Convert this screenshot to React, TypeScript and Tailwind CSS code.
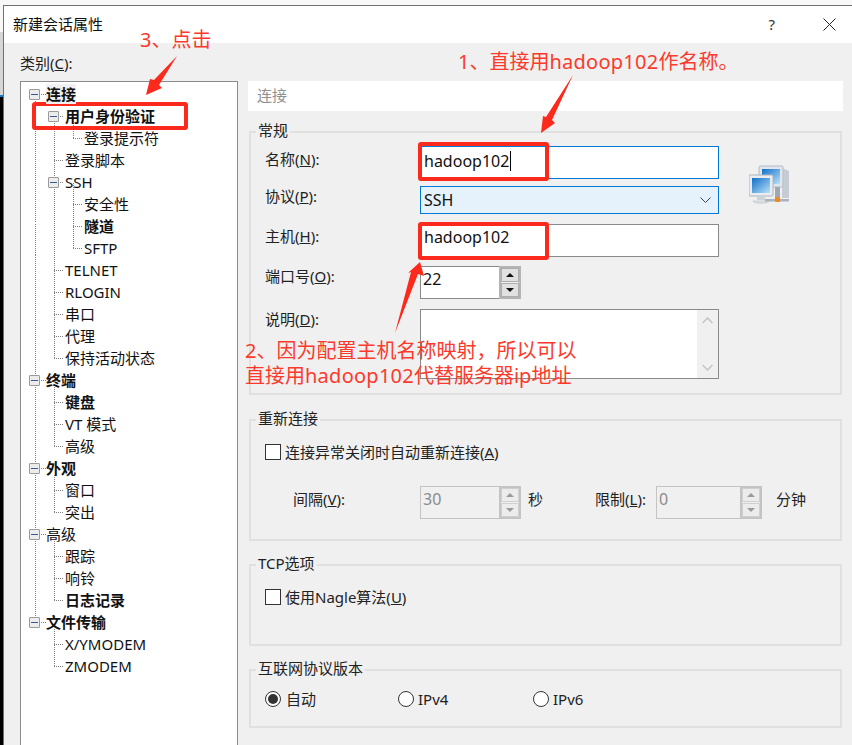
import React from "react";

const font = { fontFamily: '"Noto Sans", "Noto Sans CJK SC", sans-serif' };

type Row = { t: string; lv: 0 | 1 | 2; b?: boolean; box?: boolean; sel?: boolean };
const rows: Row[] = [
  { t: "连接", lv: 0, b: true, box: true, sel: true },
  { t: "用户身份验证", lv: 1, b: true, box: true },
  { t: "登录提示符", lv: 2 },
  { t: "登录脚本", lv: 1 },
  { t: "SSH", lv: 1, box: true },
  { t: "安全性", lv: 2 },
  { t: "隧道", lv: 2, b: true },
  { t: "SFTP", lv: 2 },
  { t: "TELNET", lv: 1 },
  { t: "RLOGIN", lv: 1 },
  { t: "串口", lv: 1 },
  { t: "代理", lv: 1 },
  { t: "保持活动状态", lv: 1 },
  { t: "终端", lv: 0, b: true, box: true },
  { t: "键盘", lv: 1, b: true },
  { t: "VT 模式", lv: 1 },
  { t: "高级", lv: 1 },
  { t: "外观", lv: 0, b: true, box: true },
  { t: "窗口", lv: 1 },
  { t: "突出", lv: 1 },
  { t: "高级", lv: 0, box: true },
  { t: "跟踪", lv: 1 },
  { t: "响铃", lv: 1 },
  { t: "日志记录", lv: 1, b: true },
  { t: "文件传输", lv: 0, b: true, box: true },
  { t: "X/YMODEM", lv: 1 },
  { t: "ZMODEM", lv: 1 },
];

const cy = (i: number) => 12.5 + i * 22;

function TreeLines() {
  const v: [number, number, number][] = [
    [14.5, cy(0), cy(24)],
    [33.5, cy(1), cy(12)],
    [52.5, cy(1) + 2, cy(2)],
    [33.5, cy(13) + 6, cy(16)],
    [33.5, cy(17) + 6, cy(19)],
    [33.5, cy(20) + 6, cy(23)],
    [33.5, cy(24) + 6, cy(26)],
    [52.5, cy(4), cy(7)],
  ];
  return (
    <svg className="absolute left-0 top-0" width="217" height="640" shapeRendering="crispEdges">
      {v.map(([x, a, b], i) => (
        <line key={i} x1={x} x2={x} y1={a} y2={b} stroke="#7f7f7f" strokeDasharray="1 1" />
      ))}
      {rows.map((r, i) => {
        const x = [14, 33, 52][r.lv];
        const x2 = [25, 43, 62][r.lv];
        return <line key={i} x1={x} x2={x2} y1={cy(i)} y2={cy(i)} stroke="#7f7f7f" strokeDasharray="1 1" />;
      })}
    </svg>
  );
}

function TreeRow({ r }: { r: Row }) {
  const pad = r.lv === 0 ? "pl-[8px]" : r.lv === 1 ? "pl-[27px]" : "pl-[63px]";
  return (
    <div className={`relative flex h-[22px] items-center ${pad}`}>
      {r.box && (
        <span className="z-10 mr-[6px] flex h-[11px] w-[11px] items-center justify-center rounded-[1px] border border-[#9a9a9a] bg-[#ececec]">
          <span className="h-px w-[7px] bg-[#3c5a96]" />
        </span>
      )}
      {!r.box && r.lv === 1 && <span className="w-[17px]" />}
      <span className={`z-10 text-[15px] leading-[20px] text-[#111] ${r.b ? "font-bold" : ""} ${r.sel ? "bg-[#f0f0f0] px-0" : ""}`}>
        {r.t}
      </span>
    </div>
  );
}

function Group({ title, h, mt, children }: { title: string; h: string; mt: string; children?: React.ReactNode }) {
  return (
    <div className={`mx-px border-2 border-[#e0e0e0] ${h} ${mt} flex flex-col`}>
      <div className="-mt-[13px] ml-[5px] h-[20px] w-fit bg-[#f0f0f0] px-[2px] text-[15px] leading-[20px] text-[#222]">{title}</div>
      {children}
    </div>
  );
}

function Tri({ up, color }: { up?: boolean; color: string }) {
  return (
    <svg width="8" height="4" viewBox="0 0 8 4">
      <polygon points={up ? "4,0 8,4 0,4" : "0,0 8,0 4,4"} fill={color} />
    </svg>
  );
}

function Spin({ value, w, disabled }: { value: string; w: string; disabled?: boolean }) {
  const tri = disabled ? "#9a9a9a" : "#111";
  const btn = disabled ? "border-[#d0d0d0] bg-[#ececec]" : "border-[#adadad] bg-[#e1e1e1]";
  return (
    <div className={`flex h-[33px] ${w} border border-r-0 ${disabled ? "border-[#c4c4c4] bg-[#f0f0f0]" : "border-[#8a8a8a] bg-white"}`}>
      <span className={`flex-1 pl-[2px] text-[16px] leading-[25px] ${disabled ? "text-[#8a8a8a]" : "text-[#111]"}`}>{value}</span>
      <div className={`-my-px flex w-[22px] flex-col justify-between border-2 ${disabled ? "border-[#c4c4c4]" : "border-[#b4b4b4]"} bg-[#f0f0f0]`}>
        <span className={`flex h-[14px] items-center justify-center border ${btn}`}><Tri up color={tri} /></span>
        <span className={`flex h-[14px] items-center justify-center border ${btn}`}><Tri color={tri} /></span>
      </div>
    </div>
  );
}

function Radio({ checked }: { checked?: boolean }) {
  return (
    <span className="flex h-[16px] w-[16px] items-center justify-center rounded-full border border-[#333] bg-white">
      {checked && <span className="h-[10px] w-[10px] rounded-full bg-[#333]" />}
    </span>
  );
}

function NetIcon() {
  return (
    <svg className="ml-[30px] mt-[19px] blur-[0.4px]" width="42" height="42" viewBox="0 0 42 42">
      <defs>
        <linearGradient id="scr" x1="0" y1="0" x2="1" y2="1">
          <stop offset="0" stopColor="#0f6fc8" />
          <stop offset="1" stopColor="#b9e2f7" />
        </linearGradient>
      </defs>
      <path d="M33 3l7 3v27h-7z" fill="#c5ccd4" />
      <rect x="10" y="1" width="24" height="21" rx="1" fill="#dfe5ea" stroke="#b4bcc4" />
      <rect x="13" y="4" width="18" height="15" fill="url(#scr)" />
      <path d="M26 22h5v13h-5z" fill="#9ea8b2" />
      <rect x="0" y="10" width="24" height="21" rx="1" fill="#e8edf1" stroke="#aab3bb" />
      <rect x="3" y="13" width="18" height="15" fill="url(#scr)" />
      <path d="M8 31h8v4H8z" fill="#ccd3d9" />
      <path d="M4 36c0 3 16 3 16 0z" fill="#dfe4e8" stroke="#a9b2ba" strokeWidth="0.5" />
      <rect x="16" y="34" width="24" height="2.5" fill="#aab3bb" />
      <rect x="26" y="32" width="5" height="5" rx="1" fill="#f08a1d" />
    </svg>
  );
}

function Overlay() {
  return (
    <>
      <svg className="pointer-events-none absolute left-0 top-0" width="852" height="745">
        <polygon points="177,56 154,80 150,79 146,95 162,88 159,85" fill="#fb2a1c" />
        <polygon points="573,75 546,117 543,116 541,133 555,123 552,120" fill="#fb2a1c" />
        <polygon points="395,333 411,272 408,273 420,262 424,276 418,274" fill="#fb2a1c" />
      </svg>
      <div className="pointer-events-none absolute left-[32px] top-[102px] h-[28px] w-[156px] rounded-[3px] border-[4px] border-[#fb2a1c]" />
      <div className="pointer-events-none absolute left-[418px] top-[142px] h-[39px] w-[131px] rounded-[3px] border-[4px] border-[#fb2a1c]" />
      <div className="pointer-events-none absolute left-[418px] top-[222px] h-[38px] w-[131px] rounded-[3px] border-[4px] border-[#fb2a1c]" />
      <div className="absolute left-[140px] top-[26px] text-[20px] leading-[28px] text-[#fb3a2c]">3、点击</div>
      <div className="absolute left-[458px] top-[48px] text-[20px] leading-[28px] text-[#fb3a2c]">
        1、直接用<span className="tracking-[0.25px]">hadoop102</span>作名称。
      </div>
      <div className="absolute left-[245px] top-[338px] text-[20px] leading-[25px] text-[#fb3a2c]">
        <div>2、因为配置主机名称映射，所以可以</div>
        <div>直接用<span className="tracking-[0.25px]">hadoop102</span>代替服务器ip地址</div>
      </div>
    </>
  );
}

export default function App() {
  return (
    <div className="relative flex h-[745px] w-[852px] overflow-hidden bg-[#f0f0f0]" style={font}>
      <div className="flex w-[3px] flex-col">
        <div className="h-[32px] bg-[#f8f8f8]" />
        <div className="h-[63px] bg-[#d6d6d6]" />
        <div className="h-[2px] bg-[#1979c9]" />
        <div className="flex-1 bg-black" />
      </div>
      <div className="flex flex-1 flex-col">
        <div className="h-[5px] bg-[#f8f8f8]" />
        <div className="flex flex-1 flex-col border-l border-t border-[#707070]">
          <div className="flex h-[37px] items-center bg-white pl-[9px] pr-[16px] text-[15px] text-[#111]">
            <span>新建会话属性</span>
            <span className="ml-auto mr-[48px] text-[15px] text-[#333]">?</span>
            <svg width="13" height="13" viewBox="0 0 13 13">
              <path d="M.5.5l12 12M12.5.5l-12 12" stroke="#222" fill="none" />
            </svg>
          </div>
          <div className="flex flex-1 pl-[16px]">
            <div className="flex w-[218px] flex-col">
              <div className="h-[38px] pt-[10px] text-[15px] leading-[20px] text-[#222]">
                类别(<u>C</u>):
              </div>
              <div className="relative flex-1 border border-[#8b8b8b] border-b-0 bg-white pt-px">
                <TreeLines />
                {rows.map((r, i) => (
                  <TreeRow key={i} r={r} />
                ))}
              </div>
            </div>
            <div className="ml-[10px] flex w-[595px] flex-col pt-[38px]">
              <div className="flex h-[30px] items-center bg-white pb-[2px] pl-[9px] text-[15px] text-[#8f8f8f]">连接</div>
              <Group title="常规" h="h-[264px]" mt="mt-[20px]">
                <div className="flex pl-[14px] pt-[6px]">
                  <div className="flex w-[454px] flex-col text-[15px] leading-[20px] text-[#222]">
                    <div className="flex">
                      <span className="mt-[3px] w-[155px]">名称(<u>N</u>):</span>
                      <div className="h-[33px] flex-1 border border-[#0078d7] bg-white pl-[3px] text-[16px] leading-[27px] text-[#111]">
                        hadoop102<span className="ml-px inline-block h-[20px] w-px translate-y-[4px] bg-black" />
                      </div>
                    </div>
                    <div className="mt-[7px] flex">
                      <span className="w-[155px]">协议(<u>P</u>):</span>
                      <div className="flex h-[28px] flex-1 items-center justify-between border border-[#0078d7] bg-[#e5f1fb] pl-[3px] pr-[7px] text-[16px] leading-[26px] text-[#111]">
                        <span>SSH</span>
                        <svg width="11" height="6" viewBox="0 0 11 6"><path d="M.5.5l5 5 5-5" fill="none" stroke="#444" /></svg>
                      </div>
                    </div>
                    <div className="mt-[10px] flex">
                      <span className="mt-[2px] w-[155px]">主机(<u>H</u>):</span>
                      <div className="h-[33px] flex-1 border border-[#8a8a8a] bg-white pl-[3px] text-[16px] leading-[24px] text-[#111]">hadoop102</div>
                    </div>
                    <div className="mt-[9px] flex">
                      <span className="w-[155px]">端口号(<u>O</u>):</span>
                      <Spin value="22" w="w-[101px]" />
                    </div>
                    <div className="mt-[10px] flex">
                      <span className="w-[155px]">说明(<u>D</u>):</span>
                      <div className="flex h-[70px] flex-1 justify-end border border-[#8a8a8a] bg-white">
                        <div className="flex w-[21px] flex-col items-center justify-between bg-[#f0f0f0] py-[7px]">
                          <svg width="11" height="7" viewBox="0 0 11 7"><path d="M.5 6l5-5 5 5" fill="none" stroke="#c4c4c4" strokeWidth="1.5" /></svg>
                          <svg width="11" height="7" viewBox="0 0 11 7"><path d="M.5 1l5 5 5-5" fill="none" stroke="#c4c4c4" strokeWidth="1.5" /></svg>
                        </div>
                      </div>
                    </div>
                  </div>
                  <NetIcon />
                </div>
              </Group>
              <Group title="重新连接" h="h-[122px]" mt="mt-[24px]">
                <div className="flex items-center pl-[14px] pt-[14px] text-[15px] leading-[20px] text-[#222]">
                  <span className="mr-[4px] h-[16px] w-[16px] border border-[#333] bg-white" />
                  连接异常关闭时自动重新连接(<u>A</u>)
                </div>
                <div className="mt-[24px] flex items-start pl-[42px] text-[15px] leading-[20px] text-[#222]">
                  <span className="w-[127px] pt-[3px]">间隔(<u>V</u>):</span>
                  <Spin value="30" w="w-[101px]" disabled />
                  <span className="ml-[7px] w-[67px] pt-[3px]">秒</span>
                  <span className="w-[61px] pt-[3px]">限制(<u>L</u>):</span>
                  <Spin value="0" w="w-[106px]" disabled />
                  <span className="ml-[14px] pt-[3px]">分钟</span>
                </div>
              </Group>
              <Group title="TCP选项" h="h-[82px]" mt="mt-[23px]">
                <div className="flex items-center pl-[14px] pt-[14px] text-[15px] leading-[20px] text-[#222]">
                  <span className="mr-[4px] h-[16px] w-[16px] border border-[#333] bg-white" />
                  使用Nagle算法(<u>U</u>)
                </div>
              </Group>
              <Group title="互联网协议版本" h="h-[59px]" mt="mt-[23px]">
                <div className="flex items-center pl-[14px] pt-[11px] text-[15px] leading-[20px] text-[#222]">
                  <Radio checked />
                  <span className="ml-[5px] w-[112px]">自动</span>
                  <Radio />
                  <span className="ml-[4px] w-[115px]">IPv4</span>
                  <Radio />
                  <span className="ml-[4px]">IPv6</span>
                </div>
              </Group>
            </div>
          </div>
        </div>
      </div>
      <Overlay />
    </div>
  );
}
